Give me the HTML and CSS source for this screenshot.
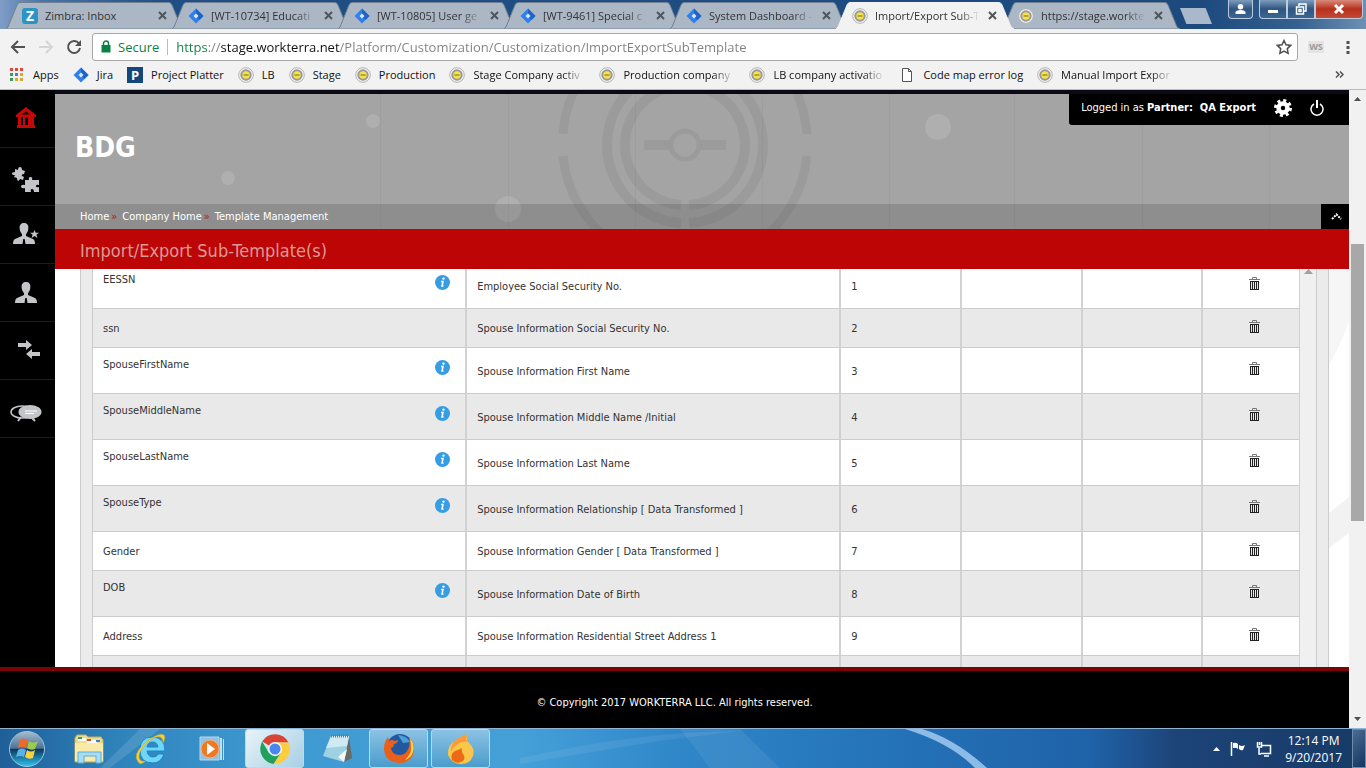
FILE: index.html
```html
<!DOCTYPE html>
<html lang="en">
	<head>
		<meta charset="UTF-8">
		<meta content="width=device-width,initial-scale=1.0" name="viewport">
		<title>Import/Export Sub-Template</title>
		<link rel="stylesheet" href="styles.css">
	</head>
	<body>
		<!-- shared icons -->
		<svg class="defs" width="0" height="0" aria-hidden="true">
			<symbol id="tabShape" viewBox="0 0 178 27" preserveAspectRatio="none">
				<path d="M0 27 L2 25 L11 3 Q12 .5 14 .5 H163 Q165 .5 166 3 L175 25 L178 27 Z"/>
			</symbol>
			<symbol id="x" viewBox="0 0 9 9"><path d="M1 1l7 7M8 1l-7 7" stroke="#4f555c" stroke-width="2" fill="none"/></symbol>
			<symbol id="jira" viewBox="0 0 16 16">
				<path d="M8 .5 15.500 8 8 15.500 .5 8z" fill="#2f80ec"/>
				<path d="M8 .5 15.500 8 11.500 12 8 8.500z" fill="#1f63c9"/>
				<path d="M8 5.500 10.500 8 8 10.500 5.500 8z" fill="#dfe9f5"/>
			</symbol>
			<symbol id="wt" viewBox="0 0 16 16">
				<circle cx="8" cy="8" r="7.300" fill="#f4f4f4" stroke="#b4b4b4" stroke-width="1"/>
				<circle cx="8" cy="8" r="4.700" fill="#f2e348" stroke="#9a9a9e" stroke-width="2"/>
				<path d="M5.500 8h5" stroke="#a88c2c" stroke-width="1.500"/>
			</symbol>
			<symbol id="info" viewBox="0 0 15 15">
				<circle cx="7.500" cy="7.500" r="7.500" fill="#359de4"/>
				<circle cx="8.500" cy="3.600" r="1.200" fill="#fff"/>
				<path d="M6 6.500h2L7 11h1.500" stroke="#fff" stroke-width="1.500" fill="none"/>
			</symbol>
			<symbol id="trash" viewBox="0 0 11 14">
				<path d="M0 2.500h11M3.500 2V.5h4V2" stroke="#777" fill="none"/>
				<path d="M1 4h9v9H1z" fill="#222"/>
				<path d="M2.500 5v7M4.500 5v7M6.500 5v7M8.500 5v7" stroke="#e8e8e8"/>
			</symbol>
			<symbol id="person" viewBox="0 0 22 22">
				<path d="M11 1c3.500 0 4.800 2.500 4.300 6-.3 2.500-1.300 4-2.300 5v2l7 3q2 1 2 5H12.500l-.8-5h-1.400l-.8 5H0q0-4 2-5l7-3v-2c-1-1-2-2.500-2.300-5C6.200 3.500 7.500 1 11 1z" fill="#c3c5c9"/>
			</symbol>
		</svg>

		<!-- browser window -->
		<div class="tabstrip">
			<div class="tabs">
				<div class="tab">
					<svg class="shape"><use href="#tabShape"/></svg>
					<span class="zimbra">Z</span>
					<span class="label">Zimbra: Inbox</span>
					<button class="close" aria-label="Close tab"><svg><use href="#x"/></svg></button>
				</div>
				<div class="tab">
					<svg class="shape"><use href="#tabShape"/></svg>
					<svg class="icon"><use href="#jira"/></svg>
					<span class="label fade">[WT-10734] Educati</span>
					<button class="close" aria-label="Close tab"><svg><use href="#x"/></svg></button>
				</div>
				<div class="tab">
					<svg class="shape"><use href="#tabShape"/></svg>
					<svg class="icon"><use href="#jira"/></svg>
					<span class="label fade">[WT-10805] User ge</span>
					<button class="close" aria-label="Close tab"><svg><use href="#x"/></svg></button>
				</div>
				<div class="tab">
					<svg class="shape"><use href="#tabShape"/></svg>
					<svg class="icon"><use href="#jira"/></svg>
					<span class="label fade">[WT-9461] Special c</span>
					<button class="close" aria-label="Close tab"><svg><use href="#x"/></svg></button>
				</div>
				<div class="tab">
					<svg class="shape"><use href="#tabShape"/></svg>
					<svg class="icon"><use href="#jira"/></svg>
					<span class="label fade">System Dashboard -</span>
					<button class="close" aria-label="Close tab"><svg><use href="#x"/></svg></button>
				</div>
				<div class="tab active">
					<svg class="shape"><use href="#tabShape"/></svg>
					<svg class="icon"><use href="#wt"/></svg>
					<span class="label fade">Import/Export Sub-T</span>
					<button class="close" aria-label="Close tab"><svg><use href="#x"/></svg></button>
				</div>
				<div class="tab">
					<svg class="shape"><use href="#tabShape"/></svg>
					<svg class="icon"><use href="#wt"/></svg>
					<span class="label fade">https://stage.workte</span>
					<button class="close" aria-label="Close tab"><svg><use href="#x"/></svg></button>
				</div>
				<button class="newtab" aria-label="New tab"></button>
			</div>
			<div class="winbtns">
				<button class="winbtn user" aria-label="Profile"><svg width="11" height="11" viewBox="0 0 11 11"><path d="M5.500 0a2.500 2.500 0 0 1 0 5.500 2.500 2.500 0 0 1 0-5.500M.5 10V8q1-2 5-2t5 2v2z" fill="#fff"/></svg></button>
				<div class="group">
					<button class="winbtn" aria-label="Minimize"><svg width="12" height="12" viewBox="0 0 12 12"><path d="M1 7h10v3H1z" fill="#fff"/></svg></button>
					<button class="winbtn" aria-label="Restore"><svg width="12" height="12" viewBox="0 0 12 12"><path d="M4 3V1h7v7H9M1.500 4h7v7h-7zM4 6.500h2v2H4z" fill="none" stroke="#fff" stroke-width="1.500"/></svg></button>
					<button class="winbtn red" aria-label="Close"><svg width="12" height="12" viewBox="0 0 12 12"><path d="M2 2l8 8M10 2l-8 8" stroke="#fff" stroke-width="3"/></svg></button>
				</div>
			</div>
		</div>
		<div class="toolbar">
			<div class="navs">
				<button aria-label="Back"><svg width="16" height="16" viewBox="0 0 16 16"><path d="M15 8H2M8 2L2 8l6 6" stroke="#505050" stroke-width="2" fill="none"/></svg></button>
				<button aria-label="Forward"><svg width="16" height="16" viewBox="0 0 16 16"><path d="M1 8h13M8 2l6 6-6 6" stroke="#d5d5d5" stroke-width="2" fill="none"/></svg></button>
				<button aria-label="Reload"><svg width="16" height="16" viewBox="0 0 16 16"><path d="M13 4.500A6 6 0 1 0 14 9" stroke="#505050" stroke-width="2" fill="none"/><path d="M15 1v6H9z" fill="#505050"/></svg></button>
			</div>
			<div class="omnibox">
				<svg width="10" height="13" viewBox="0 0 10 13"><path d="M.5 5h9v7.500h-9z" fill="#0b8043"/><path d="M2.500 5V3.500a2.500 2.500 0 0 1 5 0V5" fill="none" stroke="#0b8043" stroke-width="1.500"/></svg>
				<label for="url">Secure</label>
				<input id="url" type="text" value="https://stage.workterra.net/Platform/Customization/Customization/ImportExportSubTemplate">
				<svg width="16" height="16" viewBox="0 0 16 16"><path d="M8 1.500l2 4.300 4.700.6-3.400 3.200.8 4.700L8 12l-4.100 2.300.8-4.700L1.300 6.400 6 5.800z" fill="none" stroke="#4f4f4f" stroke-width="1.500"/></svg>
			</div>
			<span class="ws">WS</span>
			<button aria-label="Menu"><svg width="4" height="14" viewBox="0 0 4 14"><path d="M.5 1h3v3h-3zM.5 6h3v3h-3zM.5 11h3v3h-3z" fill="#505050"/></svg></button>
		</div>
		<nav class="bookmarks">
			<a href="#"><svg class="icon" viewBox="0 0 16 16"><path d="M1 1h3v3H1zM6 1h3v3H6zM11 1h3v3h-3z" fill="#da4a3a"/><path d="M1 6h3v3H1zM1 11h3v3H1z" fill="#3a9a5a"/><path d="M6 6h3v3H6z" fill="#4480d8"/><path d="M11 6h3v3h-3zM6 11h3v3H6zM11 11h3v3h-3z" fill="#e2a52c"/></svg><span>Apps</span></a>
			<a href="#"><svg class="icon"><use href="#jira"/></svg><span>Jira</span></a>
			<a href="#"><b class="pp">P</b><span>Project Platter</span></a>
			<a href="#"><svg class="icon"><use href="#wt"/></svg><span>LB</span></a>
			<a href="#"><svg class="icon"><use href="#wt"/></svg><span>Stage</span></a>
			<a href="#"><svg class="icon"><use href="#wt"/></svg><span>Production</span></a>
			<a href="#"><svg class="icon"><use href="#wt"/></svg><span class="cut fade">Stage Company activ</span></a>
			<a href="#"><svg class="icon"><use href="#wt"/></svg><span class="cut fade">Production company</span></a>
			<a href="#"><svg class="icon"><use href="#wt"/></svg><span class="cut fade">LB company activatio</span></a>
			<a href="#"><svg class="icon" viewBox="0 0 16 16"><path d="M3.500 1.500h6l3 3v10h-9zM9.500 1.500v3h3" fill="#fff" stroke="#555"/></svg><span>Code map error log</span></a>
			<a href="#"><svg class="icon"><use href="#wt"/></svg><span class="cut fade">Manual Import Expor</span></a>
			<button class="more" aria-label="More bookmarks"><svg width="9" height="7" viewBox="0 0 9 7"><path d="M1 .5l3 3-3 3M5 .5l3 3-3 3" fill="none" stroke="#505050" stroke-width="1.500"/></svg></button>
		</nav>

		<!-- web page -->
		<div class="viewport">
			<div class="page">
				<div class="app">
					<nav class="sidebar">
						<a href="#" aria-label="Home"><svg width="20" height="24" viewBox="0 0 20 24"><path d="M10 0l10 8v2h-2v8h1v3H1v-3h1v-8H0V8z" fill="#c40808"/><path d="M6 7.500l4-3 4 3zM5 10h2v8H5zM9 10h3v8H9z" fill="#000"/></svg></a>
						<a href="#" aria-label="Plugins"><svg width="28" height="32" viewBox="0 -6 28 32"><path d="M3 2l3 1q0-3 2-3t2 3l3 1-1 3q-3 0-2 2l2 1-1 3-3-1q-1 2-2 2t-1-3l-3-1 1-2q-3 0-3-1.500T3 5zM13 13h4q-1-3 1.500-3T20 13h7v5q-3-1-3 1t3 1v5h-5q0-3-2-3t-1 3h-6v-4q-4 1-4-1.500t4-1.500z" fill="#c3c5c9"/></svg></a>
						<a href="#" aria-label="Partners"><svg width="26" height="26" viewBox="0 0 26 26"><use href="#person" width="22" height="22"/><path d="M20 6h6v9h-6z" fill="#000"/><path d="M21.500 8l1.200 2.800h3.300l-2.600 2 1 3.200-2.900-2-2.900 2 1-3.200-2.600-2h3.300z" fill="#c3c5c9"/></svg></a>
						<a href="#" aria-label="Users"><svg width="22" height="24" viewBox="0 0 22 24"><use href="#person" width="22" height="22"/></svg></a>
						<a href="#" aria-label="Transfers"><svg class="arrows" width="24" height="22" viewBox="0 0 24 22"><path d="M1 3h8V0l6 5-6 5V7H1zM23 12h-8V9l-6 5 6 5v-3h8z" fill="#c3c5c9"/></svg></a>
						<a href="#" aria-label="Messages"><svg width="32" height="26" viewBox="0 -8 32 26"><ellipse cx="12" cy="8" rx="11" ry="6" fill="none" stroke="#c3c5c9" stroke-width="1.500"/><ellipse cx="20" cy="8" rx="11.500" ry="7" fill="#c3c5c9"/><path d="M11 13l-3 4M22 14l3 3" stroke="#c3c5c9" stroke-width="2"/><path d="M15 7h12M15 9.500h9" stroke="#fff"/></svg></a>
					</nav>
					<main>
						<header class="banner">
							<svg class="art" viewBox="0 0 1294 135" preserveAspectRatio="xMidYMin slice" aria-hidden="true">
								<g stroke="#000" stroke-opacity=".03">
									<path d="M325.500 0v135M453.500 0v135M580.500 0v135M707.500 0v135M834.500 0v135M959.500 0v135M1087.500 0v135M1214.500 0v135"/>
								</g>
								<g fill="none" stroke="#000" stroke-opacity=".05">
									<circle cx="630" cy="51" r="14" stroke-width="5"/>
									<path d="M589 51h25M646 51h25" stroke-width="10"/>
									<path d="M626 129a78 78 0 1 1 8 0M626 111a60 60 0 1 1 8 0" stroke-width="10"/>
									<path d="M508 40a122 122 0 0 1 40-82M508 62a122 122 0 0 0 50 87M752 40a122 122 0 0 0-40-82M752 62a122 122 0 0 1-50 87" stroke-width="9"/>
								</g>
								<g fill="#fff" fill-opacity=".12">
									<circle cx="318" cy="27" r="7"/>
									<circle cx="173" cy="84" r="7"/>
									<circle cx="453" cy="115" r="13"/>
									<circle cx="883" cy="33" r="13"/>
								</g>
							</svg>
							<div class="login">
								<span>Logged in as <b>Partner:&nbsp; QA Export</b></span>
								<a href="#" aria-label="Settings"><svg width="18" height="18" viewBox="0 0 18 18"><circle cx="9" cy="9" r="4.500" fill="none" stroke="#fff" stroke-width="4.500"/><circle cx="9" cy="9" r="7.500" fill="none" stroke="#fff" stroke-width="3" stroke-dasharray="3 2.890"/></svg></a>
								<a href="#" aria-label="Log out"><svg width="14" height="16" viewBox="0 0 14 16"><path d="M4 4a6 6 0 1 0 6 0" fill="none" stroke="#fff" stroke-width="1.500"/><path d="M7 0v8" stroke="#fff" stroke-width="2"/></svg></a>
							</div>
							<h1>BDG</h1>
							<div class="crumbs">
								<a href="#">Home</a><i>»</i><a href="#">Company Home</a><i>»</i><a href="#">Template Management</a>
								<button class="fold" aria-label="Collapse header"><svg width="11" height="7" viewBox="0 0 11 7"><path d="M1 6l4.500-4.500L10 6" fill="none" stroke="#fff" stroke-width="2" stroke-dasharray="2 1"/></svg></button>
							</div>
						</header>
						<h2>Import/Export Sub-Template(s)</h2>
						<div class="content">
							<svg class="swirl" viewBox="0 0 20 398" aria-hidden="true"><path d="M0 0h20v52Q12 75 0 96z" fill="#f6f6f6"/><path d="M0 244l20-16v36L0 279z" fill="#f2f2f2"/></svg>
							<div class="panel">
								<div class="grid">
									<table>
										<colgroup><col class="wide"><col class="wide"><col class="mid"><col class="mid"><col class="mid"><col class="slim"></colgroup>
										<tbody>
											<tr class="tall"><td><div class="name">EESSN<svg><use href="#info"/></svg></div></td><td>Employee Social Security No.</td><td>1</td><td></td><td></td><td><button aria-label="Delete"><svg><use href="#trash"/></svg></button></td></tr>
											<tr><td>ssn</td><td>Spouse Information Social Security No.</td><td>2</td><td></td><td></td><td><button aria-label="Delete"><svg><use href="#trash"/></svg></button></td></tr>
											<tr class="tall"><td><div class="name">SpouseFirstName<svg><use href="#info"/></svg></div></td><td>Spouse Information First Name</td><td>3</td><td></td><td></td><td><button aria-label="Delete"><svg><use href="#trash"/></svg></button></td></tr>
											<tr class="tall"><td><div class="name">SpouseMiddleName<svg><use href="#info"/></svg></div></td><td>Spouse Information Middle Name /Initial</td><td>4</td><td></td><td></td><td><button aria-label="Delete"><svg><use href="#trash"/></svg></button></td></tr>
											<tr class="tall"><td><div class="name">SpouseLastName<svg><use href="#info"/></svg></div></td><td>Spouse Information Last Name</td><td>5</td><td></td><td></td><td><button aria-label="Delete"><svg><use href="#trash"/></svg></button></td></tr>
											<tr class="tall"><td><div class="name">SpouseType<svg><use href="#info"/></svg></div></td><td>Spouse Information Relationship [ Data Transformed ]</td><td>6</td><td></td><td></td><td><button aria-label="Delete"><svg><use href="#trash"/></svg></button></td></tr>
											<tr><td>Gender</td><td>Spouse Information Gender [ Data Transformed ]</td><td>7</td><td></td><td></td><td><button aria-label="Delete"><svg><use href="#trash"/></svg></button></td></tr>
											<tr class="tall"><td><div class="name">DOB<svg><use href="#info"/></svg></div></td><td>Spouse Information Date of Birth</td><td>8</td><td></td><td></td><td><button aria-label="Delete"><svg><use href="#trash"/></svg></button></td></tr>
											<tr><td>Address</td><td>Spouse Information Residential Street Address 1</td><td>9</td><td></td><td></td><td><button aria-label="Delete"><svg><use href="#trash"/></svg></button></td></tr>
											<tr><td></td><td></td><td></td><td></td><td></td><td></td></tr>
										</tbody>
									</table>
									<div class="gridbar"><svg width="9" height="5" viewBox="0 0 9 5"><path d="M4.500 0L9 5H0z" fill="#a0a0a0"/></svg></div>
								</div>
							</div>
						</div>
					</main>
				</div>
				<footer>© Copyright 2017 WORKTERRA LLC. All rights reserved.</footer>
			</div>
			<div class="scrollbar">
				<svg width="7" height="4" viewBox="0 0 7 4"><path d="M3.500 0L7 4H0z" fill="#505050"/></svg>
				<div class="track"><div class="thumb"></div></div>
				<svg width="7" height="4" viewBox="0 0 7 4"><path d="M3.500 4L7 0H0z" fill="#505050"/></svg>
			</div>
		</div>

		<!-- taskbar -->
		<div class="taskbar">
			<svg class="streaks" viewBox="0 0 1366 40" preserveAspectRatio="none" aria-hidden="true">
				<path d="M905 0q45 14 70 40h12Q955 10 922 0z" fill="#a8d0f4" fill-opacity=".8"/>
				<path d="M100 40L140 0h20l-50 40z" fill="#fff" fill-opacity=".12"/>
				<path d="M520 30q120-28 220-28l-80 10-140 24z" fill="#fff" fill-opacity=".07"/>
				<path d="M680 0h60l40 40h-70z" fill="#fff" fill-opacity=".07"/>
			</svg>
			<button class="start" aria-label="Start">
				<svg width="38" height="38" viewBox="0 0 38 38">
					<defs><linearGradient id="orb" x1="0" y1="0" x2="0" y2="1"><stop offset="0" stop-color="#a9bccb"/><stop offset=".48" stop-color="#4a7396"/><stop offset=".5" stop-color="#0c3558"/><stop offset="1" stop-color="#2fc4f2"/></linearGradient></defs>
					<circle cx="19" cy="19" r="17.500" fill="url(#orb)" stroke="#9cc6e0"/>
					<path d="M12 10q4-3 8 0l-2 8q-4-2-8 0z" fill="#ee6a2c"/>
					<path d="M21 11q4 3 9 0l-3 8q-4 2-8-1z" fill="#9ccb4c"/>
					<path d="M10 20q4-3 8 0l-2 7q-4-2-8 0z" fill="#5ab2ec"/>
					<path d="M19 20q4 3 8 0l-2 8q-4 2-8-1z" fill="#fad23c"/>
				</svg>
			</button>
			<button class="task" aria-label="Explorer">
				<svg width="34" height="32" viewBox="0 0 34 32">
					<path d="M3 5l2-3h9l2 2h13l2 3v22H3z" fill="#eed98c" stroke="#c9ac54"/>
					<path d="M6 5h8v3H6zM15 7h10v3H15z" fill="#fff"/><path d="M6 4h4v2H6z" fill="#2ea84c"/><path d="M15 6h4v2h-4z" fill="#d64a3a"/><path d="M24 7h4v2h-4z" fill="#3a80d0"/>
					<path d="M3 10h28v18H3z" fill="#f9eaa8"/>
					<path d="M6 30V19h23v11h-5v-7H12v7z" fill="#a6dcf4" stroke="#5aaedc"/>
				</svg>
			</button>
			<button class="task" aria-label="Internet Explorer">
				<svg width="34" height="34" viewBox="0 0 34 34">
					<path d="M31 19H13q1 6 6 6 4 0 5-3h6q-3 9-11 9Q6 31 6 18 6 5 18 5q13 0 13 14zM13 15h11q-1-5-5.500-5T13 15z" fill="#6fd6f8" stroke="#1c86c8"/>
					<path d="M5 31Q-3 23 12 10 25 0 30 3q2 2-1 8 0-5-3-6-5-1-12 5Q2 21 6 28q2 2 6 1-5 4-7 2z" fill="#f6cf3c" stroke="#d29c1c" stroke-width=".5"/>
				</svg>
			</button>
			<button class="task" aria-label="Media Player">
				<svg width="30" height="26" viewBox="0 0 30 26">
					<path d="M2 1h19v23H2z" fill="#8fc0e6" stroke="#b5d8f0"/><path d="M22 2h2v22h-2zM25 3h1v21h-1z" fill="#bfe0f4"/>
					<circle cx="12" cy="13" r="9" fill="#ee7826" stroke="#f9b27c"/><path d="M9 7l8 6-8 6z" fill="#fff"/>
				</svg>
			</button>
			<button class="task open current" aria-label="Chrome">
				<svg width="30" height="30" viewBox="0 0 30 30">
					<path d="M15 15L2.200 7.500A15 15 0 0 1 28.500 8.500H15z" fill="#da4436"/>
					<path d="M15 15l-5 13.900A15 15 0 0 1 2.200 7.500L9 19z" fill="#1fa15d"/>
					<path d="M15 8.500h13.400A15 15 0 0 1 13.500 29.900L21 18z" fill="#ffcd40"/>
					<path d="M9 18.500l6 4 6-4-7.500 11.400A15 15 0 0 1 9 28.500z" fill="#1fa15d"/>
					<circle cx="15" cy="15" r="7" fill="#f4f6f8"/><circle cx="15" cy="15" r="5.500" fill="#4a86ee"/>
				</svg>
			</button>
			<button class="task" aria-label="Notepad">
				<svg width="30" height="30" viewBox="0 0 30 30">
					<path d="M27 3l3 21-8 4z" fill="#6b6a60"/><path d="M9 2h18l-5 26L1 22z" fill="#9ed2e2"/><path d="M9 2h18l-2 10L4 14z" fill="#cfeaf2"/><path d="M22 28l-6-5 9-8z" fill="#f3f8fa"/>
					<path d="M9 2h18" stroke="#777" stroke-width="3" stroke-dasharray="1 1"/>
				</svg>
			</button>
			<button class="task open" aria-label="Firefox">
				<svg width="32" height="32" viewBox="0 0 32 32">
					<circle cx="17" cy="14" r="13" fill="#22599e"/><path d="M15 2q9 1 12 7l-7 1z" fill="#4d9fd8"/>
					<path d="M26 4q6 6 5 14-2 12-15 12Q2 29 1 16q0-7 4-12l1 4q3-2 6 0l3-1q0 3-4 4 0 3-3 4 1 7 8 7 6 0 8-4 4-6 2-14z" fill="#e8601c"/>
					<path d="M27 5q5 7 3 14-2 6-8 8 6-6 6-11t-1-11z" fill="#fbd24a"/>
				</svg>
			</button>
			<button class="task open" aria-label="Flame">
				<svg width="28" height="32" viewBox="0 0 28 32">
					<path d="M21 1q-3 6 2 10 5 5 3 12-3 8-12 8T1 22Q0 12 9 7q4-3 12-6z" fill="#fbc64a"/>
					<path d="M21 1q-3 4-1 8-5-1-9 2-5 3-7 8Q3 11 10 6q4-3 11-5z" fill="#fa9a3a"/>
					<path d="M15 15q-1 3 1 6 3 4 0 7-6 4-11-1-2-6 3-9 3-1 7-3z" fill="#ec6a14"/>
				</svg>
			</button>
			<div class="tray">
				<svg width="7" height="4" viewBox="0 0 7 4"><path d="M3.500 0L7 4H0z" fill="#fff"/></svg>
				<svg width="16" height="16" viewBox="0 0 16 16"><path d="M1.500 1v14" stroke="#fff" stroke-width="1.500"/><path d="M3 2q3-1 5 1v5q-2-2-5-1zM9 4q3 2 6 0l-2 5q-2 1-4-1z" fill="#fff"/></svg>
				<svg width="16" height="16" viewBox="0 0 16 16"><path d="M5 4.500h9.500v8H5M8 15h5M3 7v6h2M1.500 1v5h4V1M3.500 1v3" fill="none" stroke="#fff" stroke-width="1.500"/></svg>
				<div class="clock"><span>12:14 PM</span><span>9/20/2017</span></div>
			</div>
			<button class="peek" aria-label="Show desktop"></button>
		</div>
	</body>
</html>
```
FILE: styles.css
```css
*{box-sizing:border-box;}
html,body{height:100%;margin:0;}
body{display:flex;flex-direction:column;overflow:hidden;background:#fff;font-family:"Open Sans","Noto Sans",sans-serif;font-size:11px;color:#333;}
button{padding:0;border:0;background:none;font:inherit;}
a{color:inherit;text-decoration:none;}
svg{display:block;flex:none;}
.defs{position:absolute;}
.icon{width:16px;height:16px;flex:none;}
.fade{-webkit-mask-image:linear-gradient(90deg,#000 80%,transparent);mask-image:linear-gradient(90deg,#000 80%,transparent);}

/* tabs */
.tabstrip{display:flex;justify-content:space-between;flex:none;height:29px;background:linear-gradient(90deg,#7f9dc6 0,#4a75a8 3%,#1f4f86 12%,#1d4a7e 88%,#35608f 95%,#6f90b2 100%);}
.tabs{display:flex;align-items:flex-end;padding-left:6px;}
.tab{position:relative;display:flex;align-items:center;width:178px;height:27px;margin-right:-12px;padding:0 17px 0 16px;}
.tab .shape{position:absolute;left:0;top:0;width:178px;height:27px;fill:#abb7c5;stroke:#72808f;}
.tab.active{z-index:1;}
.tab.active .shape{fill:#f2f2f2;stroke:#f2f2f2;}
.tab .icon,.zimbra{position:relative;}
.zimbra{width:16px;height:16px;border-radius:3px;background:#2c93c6;color:#fff;font-weight:bold;font-size:14px;line-height:16px;text-align:center;}
.label{position:relative;flex:1;margin:0 8px 0 7px;white-space:nowrap;}
.close{position:relative;}
.close svg{width:9px;height:9px;}
.newtab{width:32px;height:16px;margin:0 0 5px 12px;background:#a9b8ca;clip-path:polygon(0 0,80% 0,100% 100%,20% 100%);}
.winbtns{display:flex;align-items:flex-start;gap:6px;padding-right:3px;}
.group{display:flex;}
.winbtn{display:flex;align-items:center;justify-content:center;width:28px;height:19px;border:1px solid #b9cbe0;border-top:0;background:linear-gradient(#7f9cbd,#2f5580 50%,#3d6592);}
.winbtn.user{width:25px;border-radius:0 0 4px 4px;}
.group .winbtn:first-child{border-radius:0 0 0 4px;}
.winbtn.red{width:48px;border-radius:0 0 4px 0;background:linear-gradient(#d98a7c,#b8301c 50%,#c44a34);}

/* address bar */
.toolbar{display:flex;align-items:center;flex:none;height:35px;padding:0 16px 0 10px;background:#f2f2f2;}
.navs{display:flex;gap:12px;}
.omnibox{display:flex;align-items:center;flex:1;height:28px;margin:0 10px;padding:0 5px 0 8px;border:1px solid #a8a8a8;border-radius:3px;background:#fff;font-size:13px;}
.omnibox label{margin:0 8px 0 7px;padding-right:8px;border-right:1px solid #bbb;line-height:16px;color:#0b8043;}
.omnibox input{flex:1;min-width:0;padding:0;border:0;outline:0;font:inherit;color:transparent;background:linear-gradient(90deg,#0b8043 0 32px,#808080 32px 45px,#111 45px 164px,#808080 164px);-webkit-background-clip:text;background-clip:text;}
.ws{width:16px;margin-right:22px;background:#e4e4e4;color:#9a9a9a;font-size:9px;font-weight:bold;line-height:12px;text-align:center;}

/* bookmarks */
.bookmarks{display:flex;align-items:center;flex:none;gap:14px;height:26px;padding:0 22px 4px 9px;border-bottom:1px solid #b8bcc4;background:#f2f2f2;color:#111;}
.bookmarks a{display:flex;align-items:center;gap:8px;white-space:nowrap;}
.pp{width:16px;height:16px;background:#15477c;color:#fff;font-size:13px;line-height:16px;text-align:center;}
.cut{width:112px;}
.more{margin-left:auto;}

/* page */
.viewport{display:flex;flex:1;min-height:0;font-family:"DejaVu Sans Condensed","Noto Sans",sans-serif;font-size:11px;}
.page{display:flex;flex-direction:column;flex:1;min-width:0;}
.app{display:flex;flex:1;min-height:0;}
.sidebar{width:55px;background:#000;}
.sidebar a{display:flex;align-items:center;justify-content:center;height:58px;padding-right:4px;border-bottom:1px solid #1c1c26;}
.arrows{margin-left:6px;}
main{display:flex;flex-direction:column;flex:1;min-width:0;}
.banner{position:relative;display:flex;flex-direction:column;flex:none;height:139px;border-top:4px solid #0a0a14;background:#a4a4a4;color:#fff;}
.art{position:absolute;left:0;top:0;width:100%;height:100%;}
.login{position:relative;display:flex;align-items:center;align-self:flex-end;gap:18px;height:31px;padding:0 25px 4px 12px;border-radius:0 0 0 3px;background:#000;white-space:nowrap;}
h1{position:relative;flex:1;margin:0;padding-left:20px;font-size:28px;line-height:46px;}
.crumbs{position:relative;display:flex;align-items:center;height:25px;padding-left:25px;background:rgba(0,0,0,.13);line-height:26px;}
.crumbs i{margin:0 5px 0 2px;color:#b01818;font-style:normal;}
.fold{display:flex;align-items:center;justify-content:center;width:28px;height:25px;margin-left:auto;padding-left:3px;background:#000;}
h2{flex:none;height:40px;margin:0;padding:2px 0 0 25px;background:#be0505;color:#d89a96;font-size:18px;font-weight:normal;line-height:40px;}

/* template grid */
.content{position:relative;flex:1;min-height:0;overflow:hidden;padding:0 20px 0 25px;}
.swirl{position:absolute;right:0;top:0;width:20px;}
.panel{padding:0 11px;border:solid #ccc;border-width:0 1px;background:#ebebeb;}
.grid{display:flex;border:solid #ccc;border-width:0 1px;}
table{flex:1;margin-top:-6px;table-layout:fixed;border-collapse:separate;border-spacing:0;background:#fff;}
.wide{width:31%;}
.mid{width:10%;}
.slim{width:8%;}
tr:nth-child(even){background:#e9e9e9;}
td{height:39px;padding:0 15px 0 10px;border-right:2px solid #d2d2d2;border-bottom:1px solid #ccc;white-space:nowrap;}
.tall td{height:46px;padding-top:1px;}
.name{display:flex;justify-content:space-between;height:26px;line-height:14px;}
.name svg{width:15px;height:15px;margin-top:2px;}
td:last-child,.tall td:last-child{padding:0 0 3px 7px;border-right-width:1px;text-align:center;}
td button{vertical-align:middle;}
td button svg{width:11px;height:14px;}
.gridbar{width:16px;background:#f0f0f0;}
.gridbar svg{margin:0 auto;}

footer{flex:none;height:61px;border-top:4px solid #7c0404;background:#000;color:#fff;line-height:64px;text-align:center;}

.scrollbar{display:flex;flex-direction:column;align-items:center;width:17px;padding:7px 0;background:#f1f1f1;}
.track{display:flex;justify-content:center;flex:1;width:100%;}
.thumb{width:13px;height:45%;margin-top:143px;background:#a8a8a8;}

/* taskbar */
.taskbar{position:relative;display:flex;flex:none;height:40px;border-top:1px solid #8fb4d4;background:linear-gradient(90deg,#1f5f98 0,#2f84bc 9%,#3f9ad2 20%,#45a0d8 38%,#2f86c8 50%,#2676bc 62%,#1f62a8 80%,#1d4478 86%,#173a66 100%);}
.streaks{position:absolute;left:0;top:0;width:100%;height:100%;}
.start{position:relative;margin:0 13px 0 8px;}
.task{position:relative;display:flex;align-items:center;justify-content:center;width:59px;height:39px;margin-right:3px;border-radius:3px;}
.open{border:1px solid #b4dcf2;background:linear-gradient(#8cc2e4,#4a9ccc);}
.current{background:linear-gradient(135deg,#e8f3f9,#a8cfe4);}
.tray{position:relative;display:flex;align-items:center;gap:10px;margin-left:auto;color:#fff;}
.clock{display:flex;flex-direction:column;align-items:center;margin:0 10px 0 3px;font-size:12px;line-height:17px;}
.peek{position:relative;width:14px;border:1px solid #6d8cae;background:linear-gradient(135deg,#4a6c92,#14355c);}
```
